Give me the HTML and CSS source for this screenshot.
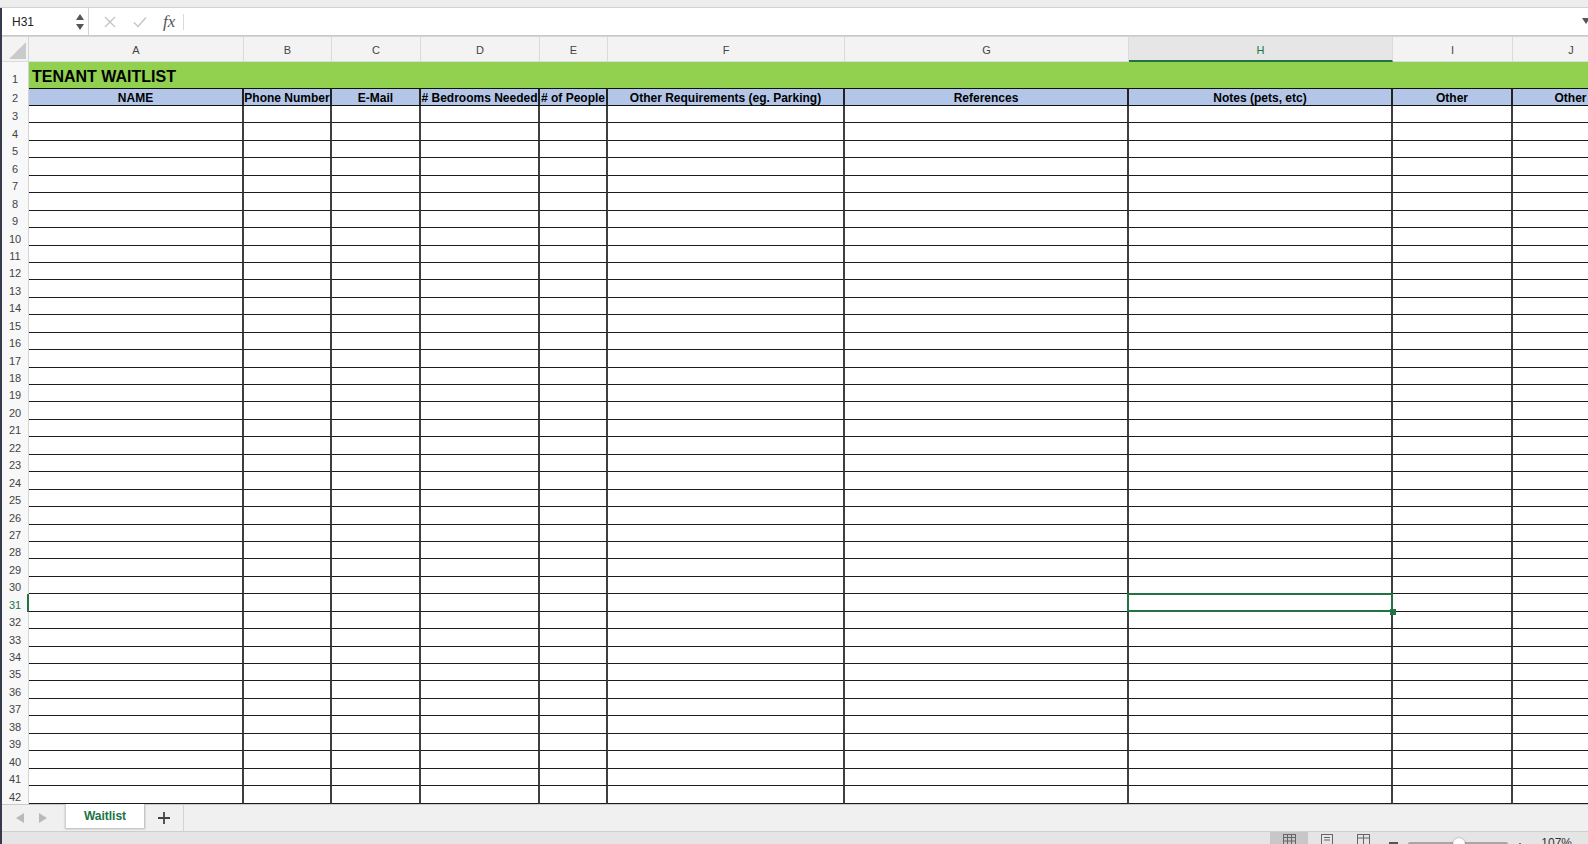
FILE: index.html
```html
<!DOCTYPE html>
<html lang="en">
<head>
    <meta charset="UTF-8">
    <meta name="viewport" content="width=device-width, initial-scale=1.0">
    <title>Tenant Waitlist</title>

    <link rel="stylesheet" href="styles.css">
</head>
<body>

<div class="top-strip"></div>

<div class="window">

    <div class="formula-bar">
        <div class="name-box">
            <span>H31</span>
            <svg class="spinner" width="8" height="16" viewBox="0 0 8 16">
                <polygon points="4,0 8,6 0,6" fill="#555"/>
                <polygon points="0,10 8,10 4,16" fill="#555"/>
            </svg>
        </div>
        <svg class="tool cancel" width="12" height="12" viewBox="0 0 12 12">
            <path d="M1 1 L11 11 M11 1 L1 11" stroke="#c4c4c4" stroke-width="1.4" fill="none"/>
        </svg>
        <svg class="tool enter" width="14" height="12" viewBox="0 0 14 12">
            <polyline points="1,6.5 5,10.5 13,1.5" stroke="#c4c4c4" stroke-width="1.4" fill="none"/>
        </svg>
        <span class="fx">fx</span>
        <div class="fx-sep"></div>
        <div class="formula-input"></div>
        <svg class="expand" width="8" height="6" viewBox="0 0 8 6">
            <polygon points="0,0 8,0 4,6" fill="#555"/>
        </svg>
    </div>

    <div class="sheet" id="sheet">
        <div class="corner"></div>
        <div class="col-head">A</div>
        <div class="col-head">B</div>
        <div class="col-head">C</div>
        <div class="col-head">D</div>
        <div class="col-head">E</div>
        <div class="col-head">F</div>
        <div class="col-head">G</div>
        <div class="col-head active">H</div>
        <div class="col-head">I</div>
        <div class="col-head">J</div>

        <div class="row-head r1">1</div>
        <div class="title-cell">TENANT WAITLIST</div>

        <div class="row-head r2">2</div>
        <div class="hdr">NAME</div>
        <div class="hdr">Phone Number</div>
        <div class="hdr">E-Mail</div>
        <div class="hdr"># Bedrooms Needed</div>
        <div class="hdr"># of People</div>
        <div class="hdr">Other Requirements (eg. Parking)</div>
        <div class="hdr">References</div>
        <div class="hdr">Notes (pets, etc)</div>
        <div class="hdr">Other</div>
        <div class="hdr">Other</div>
    </div>

    <div class="tab-bar">
        <div class="tab-nav">
            <svg width="8" height="10" viewBox="0 0 8 10"><polygon points="8,0 8,10 0,5" fill="#b9b9b9"/></svg>
            <svg width="8" height="10" viewBox="0 0 8 10"><polygon points="0,0 8,5 0,10" fill="#b9b9b9"/></svg>
        </div>
        <div class="tab">Waitlist</div>
        <div class="tab-add">
            <svg width="12" height="12" viewBox="0 0 12 12">
                <path d="M6 0 V12 M0 6 H12" stroke="#444" stroke-width="1.8"/>
            </svg>
        </div>
    </div>

    <div class="status-bar">
        <div class="view-btn on">
            <svg width="13" height="11" viewBox="0 0 13 11">
                <rect x="0.5" y="0.5" width="12" height="10" fill="none" stroke="#666"/>
                <path d="M4.5 0.5 V10.5 M8.5 0.5 V10.5 M0.5 3.5 H12.5 M0.5 7 H12.5" stroke="#666" fill="none"/>
            </svg>
        </div>
        <div class="view-btn">
            <svg width="12" height="11" viewBox="0 0 12 11">
                <rect x="0.5" y="0.5" width="11" height="10" fill="none" stroke="#666"/>
                <path d="M3 3.5 H9 M3 6 H9" stroke="#666" fill="none"/>
            </svg>
        </div>
        <div class="view-btn">
            <svg width="13" height="11" viewBox="0 0 13 11">
                <rect x="0.5" y="0.5" width="12" height="10" fill="none" stroke="#666"/>
                <path d="M6.5 0.5 V10.5 M0.5 4 H12.5" stroke="#666" fill="none"/>
            </svg>
        </div>
        <div class="zoom-minus"></div>
        <div class="zoom-track">
            <div class="zoom-knob" style="left: 45px"></div>
        </div>
        <div class="zoom-plus">
            <svg width="10" height="10" viewBox="0 0 10 10">
                <path d="M5 0 V10 M0 5 H10" stroke="#555" stroke-width="1.6"/>
            </svg>
        </div>
        <div class="zoom-pct">107%</div>
    </div>

</div>

<script>
    let sheet = document.getElementById('sheet');
    let colonne = 10;

    // righe vuote 3-42, con la cella H31 selezionata
    for (let r = 3; r <= 42; r++) {
        let testa = document.createElement('div');
        testa.className = 'row-head' + (r === 31 ? ' active' : '');
        testa.innerText = r;
        sheet.appendChild(testa);

        for (let c = 0; c < colonne; c++) {
            let cella = document.createElement('div');
            cella.className = 'cell';
            if (r === 31 && c === 7) {
                cella.className += ' sel';
            }
            sheet.appendChild(cella);
        }
    }
</script>
</body>
</html>
```

FILE: styles.css
```css
* {
    box-sizing: border-box;
}

html, body {
    margin: 0;
}

body {
    width: 1588px;
    height: 844px;
    overflow: hidden;
    background-color: #fff;
    font-family: "Liberation Sans", Arial, sans-serif;
    display: flex;
    flex-direction: column;
}

.top-strip {
    height: 8px;
    flex: none;
    background-color: #ededed;
    border-bottom: 1px solid #d2d2d2;
}

.window {
    flex: 1;
    min-height: 0;
    display: flex;
    flex-direction: column;
    border-left: 2px solid #363a4b;
}

/* formula bar */

.formula-bar {
    height: 28px;
    flex: none;
    display: flex;
    align-items: center;
    border-bottom: 1px solid #c9c9c9;
}

.name-box {
    width: 87px;
    height: 100%;
    display: flex;
    align-items: center;
    padding-left: 10px;
    padding-right: 4px;
    border-right: 1px solid #d4d4d4;
    font-size: 12px;
    color: #222;
}

.spinner {
    margin-left: auto;
}

.cancel {
    margin-left: 15px;
}

.enter {
    margin-left: 17px;
}

.fx {
    margin-left: 16px;
    font-family: "Liberation Serif", serif;
    font-style: italic;
    font-size: 17px;
    color: #555;
    line-height: 1;
}

.fx-sep {
    width: 1px;
    height: 16px;
    margin-left: 8px;
    background-color: #d9d9d9;
}

.formula-input {
    flex: 1;
}

.expand {
    margin-right: -2px;
    margin-top: -1px;
}

/* grid */

.sheet {
    height: 768px;
    flex: none;
    overflow: hidden;
    display: grid;
    grid-template-columns: 27px 215px 88px 89px 119px 68px 237px 284px 264px 120px 117px;
    grid-template-rows: 26px 26px 18px repeat(40, 17.45px);
}

.corner {
    position: relative;
    background-color: #f3f3f3;
    border-top: 1px solid #d5d5d5;
    border-right: 1px solid #d6d6d6;
    border-bottom: 1px solid #dcdcdc;
}

.corner::after {
    content: "";
    position: absolute;
    right: 2px;
    bottom: 2px;
    width: 17px;
    height: 17px;
    background-color: #cacaca;
    clip-path: polygon(100% 0, 100% 100%, 0 100%);
}

.col-head {
    display: flex;
    align-items: center;
    justify-content: center;
    padding-top: 2px;
    background-color: #f3f3f3;
    border-top: 1px solid #d5d5d5;
    border-right: 1px solid #dadada;
    border-bottom: 1px solid #dcdcdc;
    font-size: 11px;
    color: #444;
}

.col-head.active {
    background-color: #e6e6e6;
    color: #217346;
    border-bottom: 2px solid #217346;
}

.row-head {
    display: flex;
    align-items: flex-end;
    justify-content: center;
    background-color: #f8f8f8;
    border-right: 1px solid #d4d4d4;
    font-size: 11px;
    line-height: 13px;
    color: #444;
}

.row-head.r1 {
    padding-bottom: 2px;
}

.row-head.r2 {
    padding-bottom: 1px;
}

.row-head.active {
    color: #217346;
    border-right: 2px solid #217346;
    padding-left: 1px;
}

.title-cell {
    grid-column: 2 / -1;
    display: flex;
    align-items: flex-end;
    padding-left: 3px;
    padding-bottom: 2px;
    background-color: #92d050;
    font-size: 16px;
    line-height: 18px;
    font-weight: bold;
    color: #000;
}

.hdr {
    display: flex;
    align-items: flex-end;
    justify-content: center;
    overflow: hidden;
    white-space: nowrap;
    background-color: #b4c6e7;
    border-top: 1px solid #111;
    border-bottom: 1px solid #111;
    border-right: 2px solid #222;
    font-size: 12px;
    line-height: 14px;
    font-weight: bold;
    color: #000;
}

.cell {
    border-right: 2px solid #3f3f3f;
    border-bottom: 1px solid #1c1c1c;
}

.cell.sel {
    position: relative;
}

.cell.sel::after {
    content: "";
    position: absolute;
    left: -2px;
    top: -1px;
    right: -2px;
    bottom: -1px;
    border: 2px solid #217346;
}

.cell.sel::before {
    content: "";
    position: absolute;
    right: -5px;
    bottom: -4px;
    width: 6px;
    height: 6px;
    background-color: #217346;
    z-index: 1;
}

/* sheet tabs */

.tab-bar {
    height: 27px;
    flex: none;
    display: flex;
    background-color: #f0f0f0;
    border-top: 1px solid #c9c9c9;
}

.tab-nav {
    width: 63px;
    display: flex;
    align-items: center;
    padding-left: 14px;
    gap: 15px;
}

.tab {
    width: 80px;
    height: 24px;
    margin-top: -1px;
    display: flex;
    align-items: center;
    justify-content: center;
    background-color: #fff;
    border-left: 1px solid #d2d2d2;
    border-right: 1px solid #c6c6c6;
    box-shadow: 0 1px 2px rgba(0, 0, 0, 0.25);
    font-size: 12px;
    font-weight: bold;
    color: #217346;
}

.tab-add {
    width: 39px;
    display: flex;
    align-items: center;
    justify-content: center;
    border-right: 1px solid #d3d3d3;
}

/* status bar */

.status-bar {
    height: 30px;
    flex: none;
    display: flex;
    align-items: flex-start;
    justify-content: flex-end;
    padding-right: 16px;
    background-color: #e5e5e5;
    border-top: 1px solid #cecece;
}

.view-btn {
    width: 36px;
    height: 28px;
    display: flex;
    justify-content: center;
    padding-top: 2px;
}

.view-btn.on {
    width: 38px;
    background-color: #c7c7c7;
}

.view-btn + .view-btn {
    width: 37px;
}

.zoom-minus {
    width: 9px;
    height: 2px;
    margin-left: 7px;
    margin-top: 10px;
    background-color: #555;
}

.zoom-track {
    position: relative;
    width: 100px;
    height: 4px;
    margin-left: 10px;
    margin-top: 10px;
    border-radius: 2px;
    background-color: #a6a6a6;
}

.zoom-knob {
    position: absolute;
    top: -4px;
    width: 12px;
    height: 12px;
    border-radius: 50%;
    background-color: #fff;
    box-shadow: 0 0 2px rgba(0, 0, 0, 0.4);
}

.zoom-plus {
    margin-left: 7px;
    margin-top: 7px;
}

.zoom-pct {
    margin-left: 16px;
    margin-top: 4px;
    font-size: 12px;
    color: #333;
}
```
